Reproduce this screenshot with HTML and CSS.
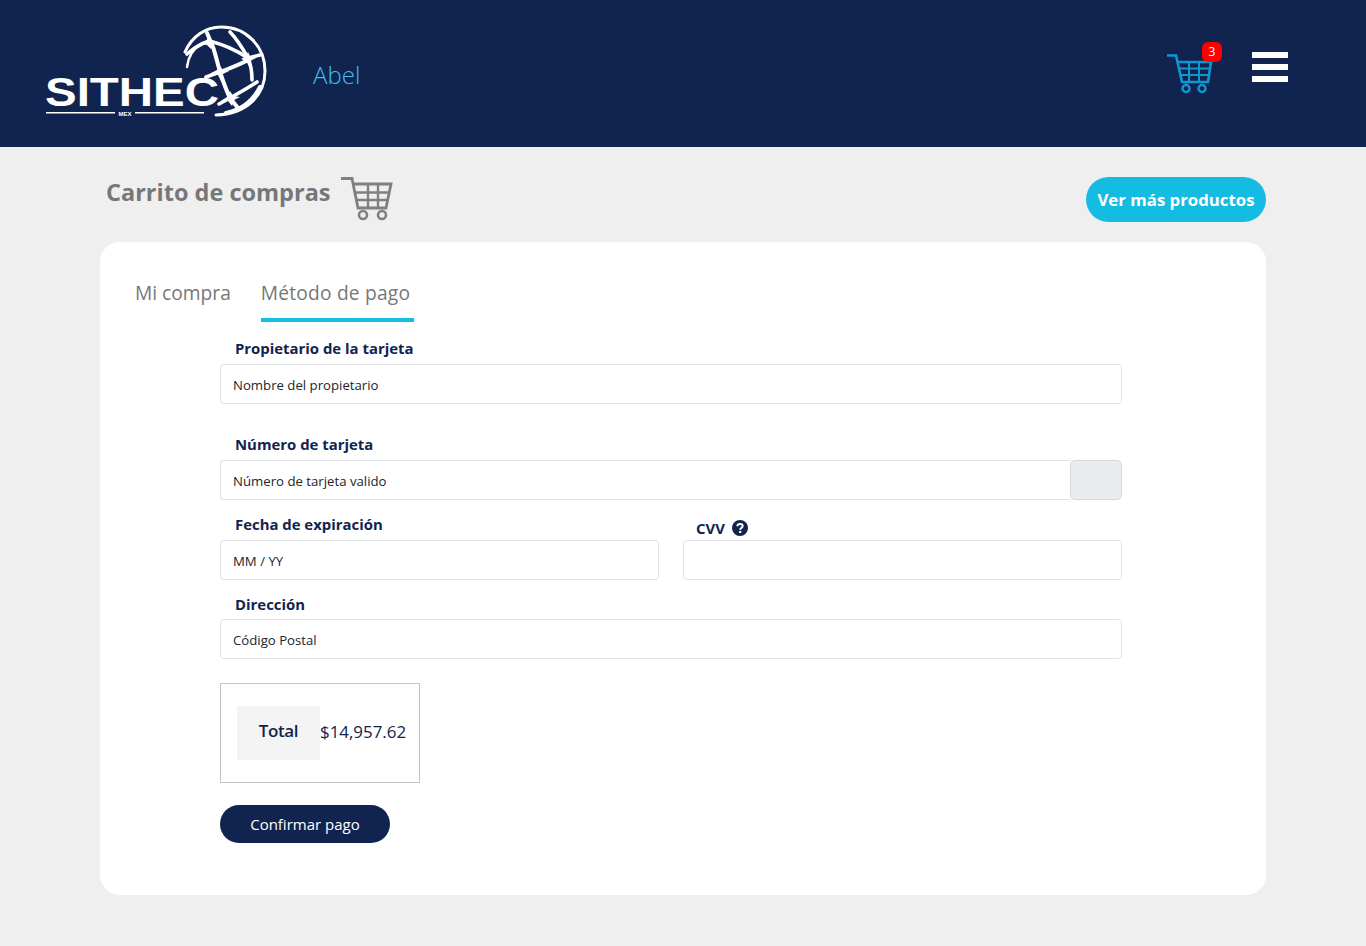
FILE: index.html
```html
<!DOCTYPE html>
<html lang="es">
<head>
    <meta charset="UTF-8">
    <meta name="viewport" content="width=device-width, initial-scale=1.0">
    <title>Carrito de compras</title>
    <link rel="stylesheet" href="styles.css">
</head>
<body>

    <header class="topbar">
        <div class="brand">
            <svg class="logo" width="224" height="94" viewBox="0 0 224 94">
                <g fill="none" stroke="#fff" stroke-linecap="round">
                    <path d="M141 27 C148 11 162 2 177 2 C202 2 221 21 221 46 C221 70 203 89 172 90" stroke-width="3"/>
                    <path d="M216 62 C209 76 197 85 182 88" stroke-width="4"/>
                    <path d="M143 42 C144 33 149 24 157 19" stroke-width="2.500"/>
                    <path d="M163 8 L169 22 C172 31 174 40 176 47 C179 56 182 65 186 73 L194 83" stroke-width="4"/>
                    <path d="M143 29 C150 23 156 19 165 16 C178 19 192 25 204 33 L216 30" stroke-width="3.600"/>
                    <path d="M186 7 C193 14 199 24 204 33 C207 40 208 47 208 55" stroke-width="3.600"/>
                    <path d="M162 52 L176 47 C187 43 197 39 206 34" stroke-width="3.800"/>
                    <path d="M175 79 L186 73 C195 68 204 63 213 57" stroke-width="3.600"/>
                </g>
                <g fill="#fff">
                    <path d="M176 41 L179 45 L185 46 L179 49 L177 56 L174 50 L167 48 L173 45 Z"/>
                    <path d="M186 66 L189 71 L196 72 L190 75 L188 81 L184 76 L177 76 L183 72 Z"/>
                    <path d="M165 11 L168 15 L174 17 L168 19 L167 24 L163 20 L157 19 L162 16 Z"/>
                    <path d="M204 27 L206 31 L212 33 L206 36 L205 41 L202 36 L197 34 L202 31 Z"/>
                    <rect x="2" y="87" width="69" height="1.500"/>
                    <rect x="91" y="87" width="69" height="1.500"/>
                </g>
                <text class="logo-name" x="1" y="81" textLength="174" lengthAdjust="spacingAndGlyphs">SITHEC</text>
                <text class="logo-mex" x="74.500" y="90.500">MEX</text>
            </svg>
            <span class="user-name">Abel</span>
        </div>
        <div class="topbar-actions">
            <div class="cart-link">
                <svg width="46" height="42" viewBox="0 0 46 42" fill="none" stroke="#0f97cf">
                    <path d="M0 2.500 H9 L15 29 H41 L44 9 H11" stroke-width="2.600"/>
                    <path d="M12.500 15.500 H43 M14 22 H42 M22 9 V29 M32 9 V29" stroke-width="2"/>
                    <circle cx="19" cy="35.500" r="3.500" stroke-width="2.400"/>
                    <circle cx="35" cy="35.500" r="3.500" stroke-width="2.400"/>
                </svg>
                <span class="cart-badge">3</span>
            </div>
            <div class="menu-icon"><span></span><span></span><span></span></div>
        </div>
    </header>

    <main class="page">
        <div class="page-head">
            <div class="page-title">
                <h1>Carrito de compras</h1>
                <svg width="54" height="46" viewBox="0 0 54 46" fill="none" stroke="#808080">
                    <path d="M0 1.500 H11 L17 31 H45 L50 7 H12" stroke-width="2.800"/>
                    <path d="M14 15.500 H49 M15.500 23 H47 M27 7 V31 M37 7 V31" stroke-width="2.400"/>
                    <circle cx="22" cy="38" r="4" stroke-width="2.600"/>
                    <circle cx="41" cy="38" r="4" stroke-width="2.600"/>
                </svg>
            </div>
            <button class="more-btn" type="button">Ver más productos</button>
        </div>

        <section class="card">
            <nav class="tabs">
                <span class="tab">Mi compra</span>
                <span class="tab active">Método de pago</span>
            </nav>

            <form class="pay-form">
                <div class="field field-owner">
                    <label>Propietario de la tarjeta</label>
                    <input class="control" type="text" placeholder="Nombre del propietario">
                </div>

                <div class="field field-number">
                    <label>Número de tarjeta</label>
                    <div class="input-group">
                        <input class="control" type="text" placeholder="Número de tarjeta valido">
                        <span class="input-addon"></span>
                    </div>
                </div>

                <div class="form-row">
                    <div class="field">
                        <label>Fecha de expiración</label>
                        <input class="control" type="text" placeholder="MM / YY">
                    </div>
                    <div class="field">
                        <label class="label-cvv">CVV
                            <svg width="16" height="16" viewBox="0 0 16 16">
                                <circle cx="8" cy="8" r="8" fill="#112450"/>
                                <path d="M5.300 6.300 C5.400 4.700 6.500 3.900 8 3.900 C9.600 3.900 10.700 4.800 10.700 6.100 C10.700 7.900 8.200 7.900 8.200 9.800" fill="none" stroke="#fff" stroke-width="2"/>
                                <rect x="7.100" y="10.900" width="2.200" height="2.100" fill="#fff"/>
                            </svg>
                        </label>
                        <input class="control" type="text">
                    </div>
                </div>

                <div class="field field-address">
                    <label>Dirección</label>
                    <input class="control" type="text" placeholder="Código Postal">
                </div>

                <div class="total-box">
                    <span class="total-label">Total</span>
                    <span class="total-value">$14,957.62</span>
                </div>

                <button class="confirm-btn" type="button">Confirmar pago</button>
            </form>
        </section>
    </main>

</body>
</html>
```

FILE: styles.css
```css
* {
    box-sizing: border-box;
}
body {
    font-family: "Open Sans", "Noto Sans", Arial, sans-serif;
    background-color: #efefef;
    margin: 0;
    padding: 0;
    min-height: 946px;
}
.topbar {
    height: 147px;
    background-color: #112450;
    display: flex;
    justify-content: space-between;
    padding: 25px 78px 0 44px;
}
.brand {
    display: flex;
    align-items: flex-start;
}
.logo-name {
    font-family: "Liberation Sans", Arial, sans-serif;
    font-size: 40px;
    font-weight: 700;
    fill: #fff;
}
.logo-mex {
    font-family: "Liberation Sans", Arial, sans-serif;
    font-size: 6px;
    font-weight: 700;
    fill: #fff;
}
.user-name {
    margin: 33px 0 0 45px;
    font-size: 24px;
    font-weight: 300;
    line-height: 34px;
    color: #38c0f0;
}
.topbar-actions {
    display: flex;
    align-items: flex-start;
}
.cart-link {
    position: relative;
    margin-top: 28px;
    width: 46px;
    height: 42px;
}
.cart-badge {
    position: absolute;
    top: -11px;
    left: 35px;
    width: 20px;
    height: 20px;
    border-radius: 6px;
    background-color: #f00;
    color: #fff;
    font-size: 12px;
    line-height: 20px;
    text-align: center;
}
.menu-icon {
    margin: 27px 0 0 39px;
    width: 36px;
    display: flex;
    flex-direction: column;
    gap: 6px;
}
.menu-icon span {
    display: block;
    height: 6px;
    background-color: #fff;
}
.page {
    width: 1166px;
    margin: 0 auto;
    padding-top: 30px;
}
.page-head {
    height: 65px;
    display: flex;
    justify-content: space-between;
    align-items: flex-start;
}
.page-title {
    display: flex;
    align-items: flex-start;
    padding-left: 6px;
}
.page-title h1 {
    margin: 0 10px 0 0;
    font-size: 23.500px;
    font-weight: 700;
    line-height: 31px;
    color: #777;
}
.more-btn {
    width: 180px;
    height: 45px;
    border: none;
    border-radius: 23px;
    background-color: #14bce3;
    color: #fff;
    font-family: inherit;
    font-size: 16.800px;
    font-weight: 700;
    cursor: pointer;
    padding: 0;
}
.card {
    height: 653px;
    background-color: #fff;
    border-radius: 20px;
    padding: 32px 0 0 35px;
}
.tabs {
    display: flex;
    gap: 30px;
}
.tab {
    height: 48px;
    font-size: 19.200px;
    line-height: 38px;
    color: #777;
}
.tab.active {
    width: 153px;
    border-bottom: 4px solid #14bce3;
    letter-spacing: .2px;
}
.pay-form {
    width: 902px;
    margin-left: 85px;
    padding-top: 16px;
}
.field label {
    display: block;
    padding-left: 15px;
    font-size: 14.900px;
    font-weight: 700;
    line-height: 20px;
    height: 26px;
    color: #112450;
}
.control {
    display: block;
    width: 100%;
    height: 40px;
    padding: 2px 12px 0;
    border: 1px solid #dee2e6;
    border-radius: 4px;
    background-color: #fff;
    font-family: inherit;
    font-size: 13.200px;
}
.control::placeholder {
    color: #212529;
    opacity: 1;
}
.field-owner {
    height: 96px;
}
.field-number {
    height: 80px;
}
.field-address {
    height: 89px;
}
.field-address label {
    height: 25px;
}
.input-group {
    display: flex;
}
.input-group .control {
    flex: 1;
    border-right: none;
    border-radius: 4px 0 0 4px;
}
.input-addon {
    width: 52px;
    height: 40px;
    background-color: #e9ecef;
    border: 1px solid #d5d9dd;
    border-radius: 5px;
}
.form-row {
    display: grid;
    grid-template-columns: 439px 439px;
    gap: 24px;
    height: 80px;
}
.field .label-cvv {
    display: flex;
    align-items: center;
    gap: 7px;
    padding: 2px 0 0 13px;
}
.total-box {
    width: 200px;
    height: 100px;
    border: 1px solid #c4c4c4;
    display: flex;
    align-items: center;
    padding-left: 16px;
}
.total-label {
    width: 83px;
    height: 54px;
    background-color: #f4f4f4;
    color: #112450;
    font-size: 17px;
    font-weight: 600;
    letter-spacing: -.4px;
    line-height: 50px;
    text-align: center;
}
.total-value {
    font-size: 16.900px;
    line-height: 22px;
    padding-bottom: 2px;
    color: #112450;
}
.confirm-btn {
    display: block;
    width: 170px;
    height: 38px;
    margin-top: 22px;
    border: none;
    border-radius: 19px;
    background-color: #112450;
    color: #fff;
    font-family: inherit;
    font-size: 15px;
    cursor: pointer;
    padding: 0;
}
```
